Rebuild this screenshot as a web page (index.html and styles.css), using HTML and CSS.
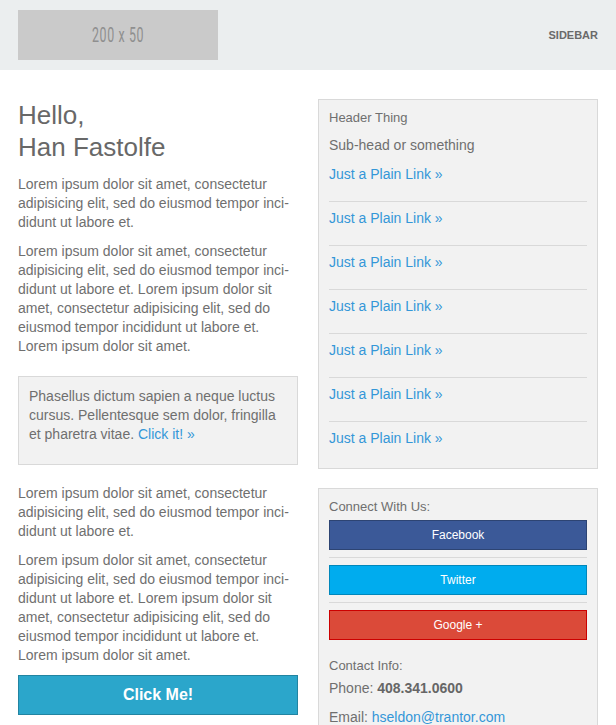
FILE: index.html
```html
<!DOCTYPE html>
<html>
<head>
<meta charset="utf-8">
<link rel="stylesheet" href="styles.css">
</head>
<body>
<div class="header">
  <div class="logo"><span class="logo-text">200 x 50</span></div>
  <div class="header-title">SIDEBAR</div>
</div>
<div class="main">
  <div class="col-left">
    <h1 class="hello">Hello,<br>Han Fastolfe</h1>
    <p class="text">Lorem ipsum dolor sit amet, consectetur adipisicing elit, sed do eiusmod tempor inci-didunt ut labore et.</p>
    <p class="text">Lorem ipsum dolor sit amet, consectetur adipisicing elit, sed do eiusmod tempor inci-didunt ut labore et. Lorem ipsum dolor sit amet, consectetur adipisicing elit, sed do eiusmod tempor incididunt ut labore et. Lorem ipsum dolor sit amet.</p>
    <div class="callout">
      <p class="text">Phasellus dictum sapien a neque luctus cursus. Pellentesque sem dolor, fringilla et pharetra vitae. <a class="link" href="#">Click it! »</a></p>
    </div>
    <p class="text">Lorem ipsum dolor sit amet, consectetur adipisicing elit, sed do eiusmod tempor inci-didunt ut labore et.</p>
    <p class="text">Lorem ipsum dolor sit amet, consectetur adipisicing elit, sed do eiusmod tempor inci-didunt ut labore et. Lorem ipsum dolor sit amet, consectetur adipisicing elit, sed do eiusmod tempor incididunt ut labore et. Lorem ipsum dolor sit amet.</p>
    <a class="big-button" href="#">Click Me!</a>
  </div>
  <div class="col-right">
    <div class="panel">
      <div class="panel-head">Header Thing</div>
      <div class="panel-sub">Sub-head or something</div>
      <p class="plink"><a class="link" href="#">Just a Plain Link »</a></p>
      <hr class="rule">
      <p class="plink"><a class="link" href="#">Just a Plain Link »</a></p>
      <hr class="rule">
      <p class="plink"><a class="link" href="#">Just a Plain Link »</a></p>
      <hr class="rule">
      <p class="plink"><a class="link" href="#">Just a Plain Link »</a></p>
      <hr class="rule">
      <p class="plink"><a class="link" href="#">Just a Plain Link »</a></p>
      <hr class="rule">
      <p class="plink"><a class="link" href="#">Just a Plain Link »</a></p>
      <hr class="rule">
      <p class="plink"><a class="link" href="#">Just a Plain Link »</a></p>
    </div>
    <div class="panel panel-social">
      <div class="panel-head connect">Connect With Us:</div>
      <a class="social facebook" href="#">Facebook</a>
      <hr class="rule">
      <a class="social twitter" href="#">Twitter</a>
      <hr class="rule">
      <a class="social google" href="#">Google +</a>
      <div class="panel-head contact">Contact Info:</div>
      <p class="contact-line">Phone: <strong>408.341.0600</strong></p>
      <p class="contact-line">Email: <a class="link" href="#">hseldon@trantor.com</a></p>
    </div>
  </div>
</div>
</body>
</html>
```
FILE: styles.css
```css
html, body {
  margin: 0;
  padding: 0;
  background: #ffffff;
}
body {
  font-family: "Liberation Sans", Arial, sans-serif;
  color: #6f6f6f;
  width: 616px;
}
.header {
  height: 70px;
  background: #ebeeef;
  display: flex;
  align-items: center;
  justify-content: space-between;
  padding: 0 18px;
  box-sizing: border-box;
}
.logo {
  width: 200px;
  height: 50px;
  background: #cacaca;
  display: flex;
  align-items: center;
  justify-content: center;
}
.logo-text {
  display: inline-block;
  font-family: Roboto, "Liberation Sans", sans-serif;
  font-size: 20px;
  color: #8f8f8f;
  transform: scaleX(0.62);
  white-space: nowrap;
  letter-spacing: 1px;
}
.header-title {
  font-size: 11px;
  font-weight: bold;
  color: #6a6a6a;
}
.main {
  display: flex;
  gap: 20px;
  padding: 29px 18px 0;
}
.col-left, .col-right {
  width: 280px;
  flex: none;
}
.hello {
  margin: 0 0 12px;
  font-size: 26px;
  line-height: 32px;
  font-weight: normal;
  color: #686868;
}
.text {
  margin: 0 0 10px;
  font-size: 14px;
  line-height: 19px;
}
.link {
  color: #3497d8;
  text-decoration: none;
}
.callout {
  margin: 20px 0 19px;
  background: #f2f2f2;
  border: 1px solid #d9d9d9;
  padding: 10px;
}
.big-button {
  display: flex;
  align-items: center;
  justify-content: center;
  height: 38px;
  background: #2ba6cb;
  border: 1px solid #2284a1;
  color: #ffffff;
  font-weight: bold;
  font-size: 16px;
  text-decoration: none;
}
.panel {
  display: flex;
  flex-direction: column;
  background: #f2f2f2;
  border: 1px solid #d9d9d9;
  padding: 10px;
}
.panel-social {
  margin-top: 19px;
}
.panel-head {
  font-size: 13px;
  line-height: 16px;
  margin-bottom: 10px;
}
.panel-sub {
  font-size: 14px;
  line-height: 19px;
  margin-bottom: 10px;
}
.plink {
  margin: 0 0 10px;
  font-size: 14px;
  line-height: 19px;
}
.rule {
  border: none;
  height: 1px;
  width: 100%;
  background: #d9d9d9;
  margin: 7px 0;
  flex: none;
}
.connect {
  margin-bottom: 5px;
}
.social {
  display: flex;
  align-items: center;
  justify-content: center;
  height: 28px;
  font-size: 12px;
  color: #ffffff;
  text-decoration: none;
}
.facebook {
  background: #3b5998;
  border: 1px solid #2d4473;
}
.twitter {
  background: #00acee;
  border: 1px solid #0087bb;
}
.google {
  background: #db4a39;
  border: 1px solid #cc0000;
}
.contact {
  margin-top: 18px;
  margin-bottom: 5px;
}
.contact-line {
  margin: 0 0 10px;
  font-size: 14px;
  line-height: 19px;
}
.contact-line strong {
  color: #666666;
}
```
